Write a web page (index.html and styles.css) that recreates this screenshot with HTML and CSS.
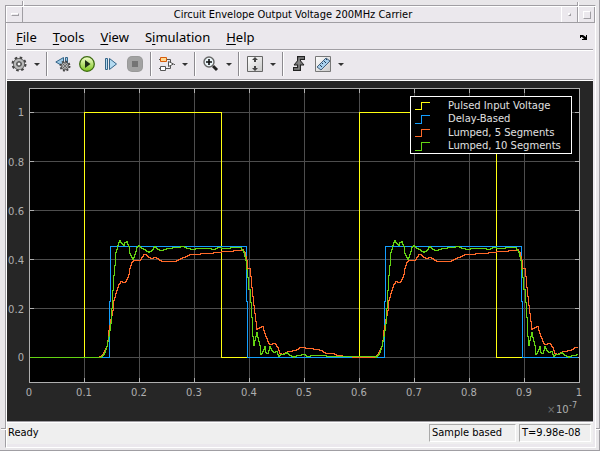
FILE: index.html
```html
<!DOCTYPE html>
<html lang="en">
<head>
    <meta charset="UTF-8">
    <meta name="viewport" content="width=device-width, initial-scale=1.0">
    <title>Circuit Envelope Output Voltage 200MHz Carrier</title>
    <link rel="stylesheet" href="styles.css">
</head>
<body>
    <div class="window">
        <i class="notch notch-tl"></i>
        <i class="notch notch-tr"></i>
        <i class="notch notch-bl"></i>
        <i class="notch notch-br"></i>
        <div class="frame">
            <header class="titlebar">
                <button class="win-btn" aria-label="Window menu"><span class="bar"></span></button>
                <h1>Circuit Envelope Output Voltage 200MHz Carrier</h1>
                <button class="win-btn" aria-label="Minimize"><span class="dot"></span></button>
                <button class="win-btn" aria-label="Maximize"><span class="square"></span></button>
            </header>

            <div class="client">
                <nav class="menubar">
                    <button><u>F</u>ile</button>
                    <button><u>T</u>ools</button>
                    <button><u>V</u>iew</button>
                    <button>S<u>i</u>mulation</button>
                    <button><u>H</u>elp</button>
                    <button class="dock" aria-label="Dock">
                        <svg width="8" height="7" viewBox="0 0 8 7"><path d="M0 1h3l3 2V1h1v5H2V5h2L2 3H1v1H0z"/></svg>
                    </button>
                </nav>

                <div class="toolbar">
                    <button class="tool" aria-label="Configuration">
                        <svg width="16" height="16" viewBox="0 0 16 16">
                            <circle cx="8" cy="8" r="6" fill="none" stroke="#444" stroke-width="3" stroke-dasharray="2.4 2.3"/>
                            <circle cx="8" cy="8" r="4" fill="none" stroke="#555" stroke-width="4"/>
                            <circle cx="8" cy="8" r="4" fill="none" stroke="#b8b8b8" stroke-width="2.4"/>
                            <circle cx="8" cy="8" r="2" fill="#f4f4f4" stroke="#444"/>
                        </svg>
                    </button>
                    <button class="caret" aria-label="Configuration options"></button>
                    <span class="sep"></span>
                    <button class="tool" aria-label="Step back options">
                        <svg width="16" height="16" viewBox="0 0 16 16">
                            <path d="M8.500 1.500v9L.8 6z" fill="#9cc8e4" stroke="#346488"/>
                            <path d="M10.500 1.500h2v6h-2z" fill="#9cc8e4" stroke="#346488"/>
                            <circle cx="10" cy="10" r="4.500" fill="none" stroke="#444" stroke-width="2" stroke-dasharray="1.900 1.600"/>
                            <circle cx="10" cy="10" r="3" fill="#eee" stroke="#555" stroke-width="2.400"/>
                            <circle cx="10" cy="10" r="3" fill="none" stroke="#aaa"/>
                            <circle cx="10" cy="10" r="1" fill="#444"/>
                        </svg>
                    </button>
                    <button class="tool" aria-label="Run">
                        <svg width="16" height="16" viewBox="0 0 16 16">
                            <defs>
                                <linearGradient id="run" x1="0" y1="0" x2="0" y2="1">
                                    <stop offset="0" stop-color="#f4ffd0"/>
                                    <stop offset="1" stop-color="#7cc41c"/>
                                </linearGradient>
                            </defs>
                            <circle cx="8" cy="8" r="7.300" fill="url(#run)" stroke="#3c6a10" stroke-width="1.300"/>
                            <path d="M6 4l5.500 4L6 12z" fill="#1c2c14"/>
                        </svg>
                    </button>
                    <button class="tool" aria-label="Step forward">
                        <svg width="16" height="16" viewBox="0 0 16 16">
                            <path d="M2.500 2.500h2v11h-2z" fill="#b4daf0" stroke="#346488"/>
                            <path d="M6.500 2.500v11l7-5.500z" fill="#b4daf0" stroke="#346488"/>
                        </svg>
                    </button>
                    <button class="tool" aria-label="Stop" disabled>
                        <svg width="16" height="16" viewBox="0 0 16 16">
                            <rect x="0" y="0" width="16" height="16" rx="5" fill="#999"/>
                            <rect x="1" y="1" width="14" height="14" rx="4" fill="#a2a2a2"/>
                            <path d="M5 5h6v6H5z" fill="#747474"/>
                        </svg>
                    </button>
                    <span class="sep"></span>
                    <button class="tool" aria-label="Highlight block">
                        <svg width="16" height="16" viewBox="0 0 16 16">
                            <path d="M8 3.500h3.500v3M7 12.500h4.500v-3" fill="none" stroke="#555"/>
                            <path d="M1.500 1.500h6v4h-6z" fill="#ffd890" stroke="#d85c0c"/>
                            <path d="M1.500 10.500h5v4h-5z" fill="#fff" stroke="#555"/>
                            <path d="M9.500 5.500v5l5-2.500z" fill="#fff" stroke="#555"/>
                            <path d="M0 3.500h1M0 12.500h1M15 8.500h1" stroke="#555"/>
                        </svg>
                    </button>
                    <button class="caret" aria-label="Highlight options"></button>
                    <span class="sep"></span>
                    <button class="tool" aria-label="Zoom">
                        <svg width="16" height="16" viewBox="0 0 16 16">
                            <path d="M10 10l4 4" stroke="#222" stroke-width="3"/>
                            <circle cx="6" cy="6" r="5" fill="#eaf4f8" stroke="#666" stroke-width="1.400"/>
                            <path d="M3 6h6M6 3v6" stroke="#111" stroke-width="1.600"/>
                        </svg>
                    </button>
                    <button class="caret" aria-label="Zoom options"></button>
                    <span class="sep"></span>
                    <button class="tool" aria-label="Scale axes">
                        <svg width="16" height="16" viewBox="0 0 16 16">
                            <defs>
                                <linearGradient id="page" x1="0" y1="0" x2="1" y2="1">
                                    <stop offset="0" stop-color="#fff"/>
                                    <stop offset="1" stop-color="#c8c8c8"/>
                                </linearGradient>
                            </defs>
                            <path d="M.5.5h15v15H.5z" fill="url(#page)" stroke="#666"/>
                            <path d="M8 1l3 3H9v2H7V4H5zM8 15l3-3H9v-2H7v2H5z" fill="#444"/>
                        </svg>
                    </button>
                    <button class="caret" aria-label="Scale options"></button>
                    <span class="sep"></span>
                    <button class="tool" aria-label="Triggers">
                        <svg width="16" height="16" viewBox="0 0 16 16">
                            <path d="M14 2H8v11H2" fill="none" stroke="#222" stroke-width="4"/>
                            <path d="M8 3l5 6H3z" fill="#777" stroke="#222"/>
                            <path d="M13 2H8v11H3" fill="none" stroke="#888" stroke-width="1.600"/>
                        </svg>
                    </button>
                    <button class="tool" aria-label="Measurements">
                        <svg width="16" height="16" viewBox="0 0 16 16">
                            <path d="M.5.5h15v15H.5z" fill="url(#page)" stroke="#777"/>
                            <path d="M2 11l9-9 4 3-9 9z" fill="#a8d0ec" stroke="#44607c"/>
                            <path d="M5 9l2 2M7 7l1 1M9 5l2 2M11 3l1 1" stroke="#24405c"/>
                        </svg>
                    </button>
                    <button class="caret" aria-label="Measurement options"></button>
                </div>

                <svg class="scope" viewBox="7 81 586 340" role="img" aria-label="Voltage over time">
                    <path d="M29 88h551v295H29z" fill="#000"/>
                    <g class="lines" transform="translate(.5 .5)">
                        <path class="grid" d="M84 88v294M139 88v294M194 88v294M249 88v294M304 88v294M359 88v294M414 88v294M469 88v294M524 88v294M29 112h550M29 161h550M29 210h550M29 259h550M29 308h550M29 357h550"/>
                        <path class="axis" d="M29 88h550v294H29zM84 88v4M139 88v4M194 88v4M249 88v4M304 88v4M359 88v4M414 88v4M469 88v4M524 88v4M84 382v-5M139 382v-5M194 382v-5M249 382v-5M304 382v-5M359 382v-5M414 382v-5M469 382v-5M524 382v-5M29 112h4M29 161h4M29 210h4M29 259h4M29 308h4M29 357h4M579 112h-5M579 161h-5M579 210h-5M579 259h-5M579 308h-5M579 357h-5"/>
                        <path class="pulsed" d="M29 357H84V112H221V357H359V112H496V357H577"/>
                        <path class="delay" d="M29 357H109V301H110V246H246V301H247V357H384V301H385V246H521V301H522V357H577"/>
                        <path class="five" id="five"/>
                        <path class="ten" id="ten"/>
                        <path d="M410 96h161v57H410z" fill="#000" stroke="#fff"/>
                        <path class="pulsed" d="M414 109h7v-7h8"/>
                        <path class="delay" d="M414 123h7v-8h8"/>
                        <path class="five" d="M414 136h7v-7h8"/>
                        <path class="ten" d="M414 150h7v-8h8"/>
                    </g>
                    <g class="legend">
                        <text x="448" y="109">Pulsed Input Voltage</text>
                        <text x="448" y="122">Delay-Based</text>
                        <text x="448" y="136">Lumped, 5 Segments</text>
                        <text x="448" y="149">Lumped, 10 Segments</text>
                    </g>
                    <g class="ticks ticks-y">
                        <text x="24" y="116">1</text>
                        <text x="24" y="166">0.8</text>
                        <text x="24" y="215">0.6</text>
                        <text x="24" y="264">0.4</text>
                        <text x="24" y="313">0.2</text>
                        <text x="24" y="361">0</text>
                    </g>
                    <g class="ticks ticks-x">
                        <text x="29" y="396">0</text>
                        <text x="84" y="396">0.1</text>
                        <text x="139" y="396">0.2</text>
                        <text x="194" y="396">0.3</text>
                        <text x="249" y="396">0.4</text>
                        <text x="304" y="396">0.5</text>
                        <text x="359" y="396">0.6</text>
                        <text x="414" y="396">0.7</text>
                        <text x="469" y="396">0.8</text>
                        <text x="524" y="396">0.9</text>
                        <text x="579" y="396">1</text>
                    </g>
                    <g class="ticks">
                        <text class="times" x="547" y="413">×</text>
                        <text x="556" y="413">10</text>
                        <text class="power" x="569" y="408">-7</text>
                    </g>
                </svg>

                <footer class="statusbar">
                    <span class="message">Ready</span>
                    <span class="cell cell-mode">Sample based</span>
                    <span class="cell cell-time">T=9.98e-08</span>
                </footer>
            </div>
        </div>
    </div>
    <script src="scope.js"></script>
</body>
</html>
```
FILE: styles.css
```css
* {
    box-sizing: border-box;
}
body {
    margin: 0;
    background-color: #e8e6e9;
    color: #000;
    font-family: "DejaVu Sans Condensed", "DejaVu Sans", sans-serif;
    font-size: 11px;
}
button {
    margin: 0;
    padding: 0;
    border: none;
    background: none;
    color: inherit;
    font: inherit;
}
svg {
    display: block;
}

/* window frame */
.window {
    position: relative;
    padding: 5px 3px 2px 5px;
    border-right: 1px solid #a09ea3;
    border-bottom: 1px solid #a09ea3;
}
.frame {
    border: 1px solid #a09ea3;
    border-right-color: #fff;
    border-bottom-color: #fff;
    background-color: #ebe8ed;
}
.notch {
    position: absolute;
    background-color: #a09ea3;
}
.notch-tl {
    left: 22px;
    top: 1px;
    width: 1px;
    height: 5px;
    box-shadow: 1px 0 #fff;
}
.notch-tr {
    right: 21px;
    top: 2px;
    width: 1px;
    height: 4px;
    box-shadow: 1px 0 #fff;
}
.notch-bl {
    left: 1px;
    bottom: 21px;
    width: 5px;
    height: 1px;
    box-shadow: 0 1px #fff;
}
.notch-br {
    right: -1px;
    bottom: 21px;
    width: 4px;
    height: 1px;
    box-shadow: 0 1px #fff;
}

/* title bar */
.titlebar {
    display: flex;
    height: 17px;
    border-top: 1px solid #fff;
    border-bottom: 1px solid #a09ea3;
}
.titlebar h1 {
    flex: 1;
    margin: 0;
    padding-left: 2px;
    font-size: 11px;
    font-weight: normal;
    line-height: 15px;
    text-align: center;
}
.win-btn {
    display: flex;
    align-items: center;
    justify-content: center;
    width: 17px;
    border-left: 1px solid #fff;
    border-right: 1px solid #a09ea3;
}
.bar, .dot, .square {
    border: 1px solid #fff;
    border-right-color: #a09ea3;
    border-bottom-color: #a09ea3;
}
.bar {
    width: 8px;
    height: 3px;
}
.dot {
    width: 3px;
    height: 3px;
}
.square {
    width: 8px;
    height: 8px;
}

.client {
    padding: 0 2px 3px 0;
    border-left: 1px solid #fff;
}

/* menu */
.menubar {
    display: flex;
    align-items: center;
    height: 27px;
    padding: 2px 0 0 1px;
    border-bottom: 1px solid #a09ea3;
    font-family: "Noto Sans", sans-serif;
    font-size: 13px;
    line-height: 20px;
}
.menubar button {
    padding: 0 8px;
}
.menubar u {
    text-underline-offset: 2px;
}
.menubar .dock {
    margin-left: auto;
    padding: 0 5px;
}

/* toolbar */
.toolbar {
    display: flex;
    align-items: center;
    height: 30px;
    margin-bottom: 1px;
    padding-bottom: 2px;
    border-top: 1px solid #fff;
    border-bottom: 1px solid #a09ea3;
    box-shadow: 0 1px #fff;
}
.tool {
    display: flex;
    justify-content: center;
    width: 24px;
}
.caret {
    display: flex;
    align-items: center;
    justify-content: center;
    width: 12px;
    height: 16px;
}
.caret::before {
    content: "";
    border: 3px solid transparent;
    border-top-color: #333;
    border-bottom: none;
}
.sep {
    width: 2px;
    height: 24px;
    margin: 0 3px;
    border-left: 1px solid #8c8a8f;
    border-right: 1px solid #fff;
}

/* scope */
.scope {
    width: 100%;
    background-color: #262626;
}
.lines {
    fill: none;
    stroke-width: 1px;
    shape-rendering: crispEdges;
}
.grid {
    stroke: #4d4d4d;
}
.axis {
    stroke: #afafaf;
}
.pulsed {
    stroke: #ffff11;
}
.delay {
    stroke: #139fff;
}
.five {
    stroke: #ff6929;
}
.ten {
    stroke: #64d413;
}
.legend {
    fill: #e0e0e0;
    font-family: "DejaVu Sans", sans-serif;
    font-size: 10px;
}
.ticks {
    fill: #afafaf;
    font-family: "DejaVu Sans", sans-serif;
    font-size: 10px;
}
.ticks-y {
    text-anchor: end;
}
.ticks-x {
    text-anchor: middle;
}
.times {
    fill: #6c6c6c;
}
.power {
    font-size: 8px;
}

/* status bar */
.statusbar {
    display: flex;
    gap: 3px;
    padding: 2px 2px 2px 1px;
    border-top: 1px solid #a09ea3;
    box-shadow: inset 0 1px #fff;
    background-color: #efefef;
}
.message {
    flex: 1;
    line-height: 18px;
}
.cell {
    height: 18px;
    padding: 0 2px;
    border: 1px solid #a9a9a9;
    border-right-color: #fff;
    border-bottom-color: #fff;
    line-height: 16px;
}
.cell-mode {
    width: 87px;
}
.cell-time {
    width: 72px;
}
```
FILE: scope.js
```js
// Response to one pulse, [x, y] in plot units. The input repeats every PERIOD.
const PERIOD = 275;
const START = 29;
const END = 577;
const ZERO = 357;

const five = [
    [97, 357], [100, 356], [102, 354], [104, 350], [106, 346], [107, 340], [108, 330],
    [110, 319], [112, 310], [113, 300], [115, 293], [117, 287], [118, 284], [120, 281],
    [124, 282], [126, 279], [128, 274], [129, 268], [131, 262], [133, 260], [139, 260],
    [141, 257], [143, 254], [145, 254], [147, 256], [150, 258], [155, 257], [158, 259],
    [162, 261], [174, 261], [178, 259], [183, 257], [189, 254], [198, 254], [200, 253],
    [210, 253], [214, 252], [226, 251], [239, 250], [242, 249], [244, 252], [246, 260],
    [247, 268], [249, 268], [250, 276], [251, 287], [253, 305], [255, 321], [256, 329],
    [259, 327], [262, 326], [264, 333], [267, 341], [269, 344], [274, 343], [277, 347],
    [279, 353], [282, 354], [287, 351], [295, 350], [299, 347], [310, 348], [321, 350],
    [325, 353], [333, 353], [337, 355], [347, 356], [357, 357], [372, 357]
];

const ten = [
    [100, 357], [102, 355], [104, 352], [106, 346], [108, 336], [110, 323], [111, 308],
    [112, 290], [113, 275], [114, 265], [115, 252], [117, 245], [118, 242], [119, 240],
    [121, 243], [123, 245], [124, 242], [126, 241], [128, 246], [129, 253], [131, 257],
    [132, 259], [134, 254], [136, 247], [138, 245], [140, 247], [144, 249], [148, 252],
    [151, 250], [154, 246], [157, 249], [161, 250], [167, 248], [175, 247], [183, 246],
    [187, 248], [192, 249], [197, 248], [209, 248], [213, 249], [217, 247], [225, 248],
    [233, 247], [240, 247], [243, 252], [245, 260], [247, 277], [248, 289], [249, 289],
    [250, 302], [251, 317], [252, 336], [253, 345], [254, 340], [256, 332], [257, 337],
    [259, 345], [260, 354], [262, 351], [264, 346], [265, 352], [267, 353], [269, 346],
    [271, 350], [273, 352], [276, 351], [278, 356], [280, 354], [283, 354], [286, 352],
    [288, 354], [293, 357], [296, 355], [304, 354], [306, 356], [312, 355], [323, 355],
    [328, 356], [375, 356]
];

function valueAt(points, x) {
    for (let i = 1; i < points.length; i++) {
        const [x0, y0] = points[i - 1];
        const [x1, y1] = points[i];
        if (x >= x0 && x <= x1) {
            return Math.round(y0 + (y1 - y0) * (x - x0) / (x1 - x0));
        }
    }
    return ZERO;
}

// Draws the samples as stairs
function drawStairs(id, points) {
    const first = points[0][0];
    let d = `M${START} ${ZERO}`;
    for (let x = START; x < END; x++) {
        const t = x < first + PERIOD ? x : x - PERIOD;
        d += `V${valueAt(points, t)}H${x + 1}`;
    }
    document.getElementById(id).setAttribute('d', d);
}

drawStairs('five', five);
drawStairs('ten', ten);
```
